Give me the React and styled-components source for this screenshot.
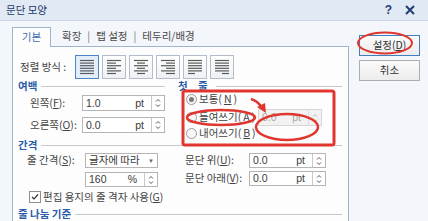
import React from 'react';
import styled, { createGlobalStyle } from 'styled-components';

const GlobalStyle = createGlobalStyle`
  html, body {
    margin: 0;
    padding: 0;
    background: #f3f6fa;
  }
  body {
    font-family: "Noto Sans CJK KR", "Noto Sans", sans-serif;
    font-size: 10.5px;
  }
`;

const Window = styled.div`
  position: relative;
  width: 428px;
  height: 221px;
  overflow: hidden;
  background: #f3f6fa;
  color: #444;
  display: flex;
  flex-direction: column;
  font-family: "Noto Sans CJK KR", "Noto Sans", sans-serif;
  font-size: 10.5px;
  line-height: 1;
`;

const TitleBar = styled.div`
  height: 20px;
  flex: none;
  display: flex;
  align-items: center;
  padding: 0 8px 0 6px;
  background: #e1e9f4;
  border-bottom: 1px solid #cbd7e6;
  color: #1d3a66;
`;

const Title = styled.span`
  flex: 1;
`;

const TitleButton = styled.span`
  width: 21px;
  display: flex;
  justify-content: center;
  color: #1d3f73;
  font-weight: bold;
  font-size: 12px;
  font-family: "Liberation Sans", sans-serif;
`;

const Body = styled.div`
  flex: 1;
  display: flex;
  padding: 5px 0 0 12px;
  gap: 10px;
  min-height: 0;
`;

const TabArea = styled.div`
  width: 337px;
  display: flex;
  flex-direction: column;
`;

const TabStrip = styled.div`
  height: 20px;
  display: flex;
  align-items: flex-end;
`;

const ActiveTab = styled.div`
  width: 37px;
  height: 19px;
  display: flex;
  align-items: center;
  justify-content: center;
  background: #fdfdfd;
  border: 1px solid #9fb3cd;
  border-bottom: none;
  margin-bottom: -1px;
  position: relative;
  z-index: 1;
  color: #3c6bb3;
`;

const OtherTabs = styled.div`
  display: flex;
  align-items: center;
  gap: 6px;
  height: 19px;
  padding-left: 11px;
  color: #4a4a4a;
`;

const Sep = styled.span`
  color: #777;
`;

const Panel = styled.div`
  flex: 1;
  background: #fdfdfd;
  border: 1px solid #9fb3cd;
  border-bottom: none;
  padding: 8px 6px 0 5px;
  display: flex;
  flex-direction: column;
`;

const AlignRow = styled.div`
  height: 24px;
  display: flex;
  align-items: center;
  padding-left: 2px;
`;

const AlignLabel = styled.span`
  width: 55px;
`;

const AlignButtons = styled.div`
  display: flex;
  gap: 3px;
`;

const AlignButton = styled.div`
  width: 22px;
  height: 22px;
  border: 1px solid ${p => (p.$active ? '#4d86c4' : '#b3bdc9')};
  background: ${p => (p.$active ? '#e4eefa' : 'linear-gradient(#ffffff, #eef1f4)')};
  display: flex;
  align-items: center;
  justify-content: center;
`;

const TopGroups = styled.div`
  display: grid;
  grid-template-columns: 147px 1fr;
  column-gap: 13px;
  margin-top: 1px;
`;

const Group = styled.div`
  display: flex;
  flex-direction: column;
  margin-top: ${p => p.$mt || 0}px;
`;

const GroupHeader = styled.div`
  height: 12px;
  display: flex;
  align-items: center;
  gap: 4px;
  color: #2a5bab;
  font-weight: bold;
  letter-spacing: ${p => (p.$spaced ? '4px' : '0')};

  &::after {
    content: '';
    flex: 1;
    height: 1px;
    background: #c9c9c9;
  }
`;

const FieldRow = styled.div`
  display: flex;
  align-items: center;
  height: ${p => p.$h || 16}px;
  margin-top: ${p => p.$mt || 0}px;
  padding-left: ${p => p.$indent || 0}px;
`;

const Label = styled.span`
  width: ${p => p.$w}px;
  flex: none;
  white-space: nowrap;
`;

const U = styled.span`
  text-decoration: underline;
`;

const InputBox = styled.div`
  width: ${p => p.$w}px;
  height: ${p => p.$h || 16}px;
  box-sizing: border-box;
  display: flex;
  align-items: center;
  border: 1px solid ${p => (p.$disabled ? '#d6d6d6' : '#b5b5b5')};
  background: ${p => (p.$disabled ? '#f2f2f2' : '#ffffff')};
  color: ${p => (p.$disabled ? '#a8a8a8' : '#3a3a3a')};
  font-family: "Liberation Sans", "Noto Sans CJK KR", sans-serif;
`;

const InputValue = styled.span`
  flex: 1;
  padding-left: 3px;
  font-family: ${p => (p.$kr ? '"Noto Sans CJK KR", sans-serif' : 'inherit')};
`;

const InputUnit = styled.span`
  padding-right: 7px;
`;

const Spinner = styled.div`
  width: 12px;
  align-self: stretch;
  border-left: 1px solid ${p => (p.$disabled ? '#dcdcdc' : '#c8c8c8')};
  display: flex;
  flex-direction: column;
  align-items: center;
  justify-content: center;
`;

const DropArrow = styled.span`
  width: 12px;
  display: flex;
  justify-content: center;
  font-size: 6px;
  color: #666;
`;

const RadioRow = styled.div`
  display: flex;
  align-items: center;
  height: ${p => p.$h}px;
  margin-top: ${p => p.$mt || 0}px;
  padding-left: 8px;
`;

const RadioLabel = styled.label`
  display: flex;
  align-items: center;
  gap: 2px;
  width: ${p => (p.$w ? `${p.$w}px` : 'auto')};
`;

const RadioCircle = styled.span`
  width: 9px;
  height: 9px;
  border-radius: 50%;
  border: 1px solid #9a9a9a;
  background: #f7f7f7;
  display: flex;
  align-items: center;
  justify-content: center;

  &::after {
    content: '';
    width: 5px;
    height: 5px;
    border-radius: 50%;
    background: ${p => (p.$checked ? '#7a7a7a' : 'transparent')};
  }
`;

const SpacingGrid = styled.div`
  display: grid;
  grid-template-columns: 160px 1fr;
`;

const CheckBox = styled.span`
  width: 10px;
  height: 10px;
  border: 1px solid #8f8f8f;
  background: #fff;
  display: flex;
  align-items: center;
  justify-content: center;
  margin-right: 2px;
`;

const Buttons = styled.div`
  display: flex;
  flex-direction: column;
  gap: 4px;
  padding-top: 9px;
`;

const Button = styled.div`
  width: 61px;
  height: 21px;
  box-sizing: border-box;
  display: flex;
  align-items: center;
  justify-content: center;
  border: 1px solid ${p => (p.$primary ? '#3f7fbf' : '#adadad')};
  background: linear-gradient(#fbfbfb, #ececec);
  color: #333;
`;

const Overlay = styled.svg`
  position: absolute;
  left: 0;
  top: 0;
  pointer-events: none;
`;

const alignIcons = [
  [[5, 19], [5, 19], [5, 19], [5, 19], [5, 19], [5, 19]],
  [[5, 19], [5, 14], [5, 19], [5, 14], [5, 19], [5, 14]],
  [[5, 19], [8, 16], [5, 19], [8, 16], [5, 19], [8, 16]],
  [[5, 19], [10, 19], [5, 19], [10, 19], [5, 19], [10, 19]],
  [[5, 19], [5, 19], [5, 19], [5, 19], [5, 19], [5, 12]],
  [[5, 19], [5, 19], [5, 19], [5, 19], [5, 19], [12, 19]],
];

function AlignIcon({ lines }) {
  return (
    <svg width="22" height="22" viewBox="1 1 22 22">
      {lines.map(([a, b], i) => (
        <line key={i} x1={a} x2={b} y1={5.5 + i * 2.6} y2={5.5 + i * 2.6} stroke="#5a5a5a" strokeWidth="1.2" />
      ))}
    </svg>
  );
}

function SpinArrows({ disabled }) {
  const c = disabled ? '#bdbdbd' : '#555';
  return (
    <svg width="6" height="10" viewBox="0 0 6 10">
      <path d="M1 3.5 L3 1.5 L5 3.5" fill="none" stroke={c} strokeWidth="1" />
      <path d="M1 6.5 L3 8.5 L5 6.5" fill="none" stroke={c} strokeWidth="1" />
    </svg>
  );
}

function NumberInput({ value, unit, w, disabled, h }) {
  return (
    <InputBox $w={w} $h={h} $disabled={disabled}>
      <InputValue>{value}</InputValue>
      <InputUnit>{unit}</InputUnit>
      <Spinner $disabled={disabled}>
        <SpinArrows disabled={disabled} />
      </Spinner>
    </InputBox>
  );
}

export default function App() {
  return (
    <>
      <GlobalStyle />
      <Window>
        <TitleBar>
          <Title>문단 모양</Title>
          <TitleButton>?</TitleButton>
          <TitleButton>
            <svg width="10" height="10" viewBox="0 0 10 10">
              <path d="M1 1 L9 9 M9 1 L1 9" stroke="#1d3f73" strokeWidth="2" />
            </svg>
          </TitleButton>
        </TitleBar>
        <Body>
          <TabArea>
            <TabStrip>
              <ActiveTab>기본</ActiveTab>
              <OtherTabs>
                <span>확장</span>
                <Sep>|</Sep>
                <span>탭 설정</span>
                <Sep>|</Sep>
                <span>테두리/배경</span>
              </OtherTabs>
            </TabStrip>
            <Panel>
              <AlignRow>
                <AlignLabel>정렬 방식 :</AlignLabel>
                <AlignButtons>
                  {alignIcons.map((lines, i) => (
                    <AlignButton key={i} $active={i === 0}>
                      <AlignIcon lines={lines} />
                    </AlignButton>
                  ))}
                </AlignButtons>
              </AlignRow>

              <TopGroups>
                <Group>
                  <GroupHeader>여백</GroupHeader>
                  <FieldRow $mt={3} $indent={12}>
                    <Label $w={52}>왼쪽(<U>F</U>):</Label>
                    <NumberInput value="1.0" unit="pt" w={84} />
                  </FieldRow>
                  <FieldRow $mt={6} $indent={12}>
                    <Label $w={52}>오른쪽(<U>O</U>):</Label>
                    <NumberInput value="0.0" unit="pt" w={84} />
                  </FieldRow>
                </Group>
                <Group>
                  <GroupHeader $spaced>첫 줄</GroupHeader>
                  <RadioRow $h={13} $mt={1}>
                    <RadioLabel>
                      <RadioCircle $checked />
                      보통(<U>N</U>)
                    </RadioLabel>
                  </RadioRow>
                  <RadioRow $h={17} $mt={3}>
                    <RadioLabel $w={72}>
                      <RadioCircle />
                      들여쓰기(<U>A</U>)
                    </RadioLabel>
                    <NumberInput value="0.0" unit="pt" w={64} h={17} disabled />
                  </RadioRow>
                  <RadioRow $h={12} $mt={1}>
                    <RadioLabel>
                      <RadioCircle />
                      내어쓰기(<U>B</U>)
                    </RadioLabel>
                  </RadioRow>
                </Group>
              </TopGroups>

              <Group>
                <GroupHeader>간격</GroupHeader>
                <SpacingGrid>
                  <Group>
                    <FieldRow $mt={2} $h={15} $indent={9}>
                      <Label $w={58}>줄 간격(<U>S</U>):</Label>
                      <InputBox $w={73} $h={15}>
                        <InputValue $kr>글자에 따라</InputValue>
                        <DropArrow>▼</DropArrow>
                      </InputBox>
                    </FieldRow>
                    <FieldRow $mt={4} $h={15} $indent={67}>
                      <NumberInput value="160" unit="%" w={73} h={15} />
                    </FieldRow>
                    <FieldRow $mt={3} $h={14} $indent={11}>
                      <CheckBox>
                        <svg width="8" height="8" viewBox="0 0 8 8">
                          <path d="M1 4 L3 6 L7 1.5" fill="none" stroke="#333" strokeWidth="1.2" />
                        </svg>
                      </CheckBox>
                      편집 용지의 줄 격자 사용(<U>G</U>)
                    </FieldRow>
                  </Group>
                  <Group>
                    <FieldRow $mt={2} $h={15} $indent={7}>
                      <Label $w={64}>문단 위(<U>U</U>):</Label>
                      <NumberInput value="0.0" unit="pt" w={77} h={15} />
                    </FieldRow>
                    <FieldRow $mt={3} $h={15} $indent={7}>
                      <Label $w={64}>문단 아래(<U>V</U>):</Label>
                      <NumberInput value="0.0" unit="pt" w={77} h={15} />
                    </FieldRow>
                  </Group>
                </SpacingGrid>
              </Group>

              <Group $mt={4}>
                <GroupHeader>줄 나눔 기준</GroupHeader>
              </Group>
            </Panel>
          </TabArea>
          <Buttons>
            <Button $primary>설정(<U>D</U>)</Button>
            <Button>취소</Button>
          </Buttons>
        </Body>

        <Overlay width="428" height="221" viewBox="0 0 428 221">
          <g fill="none" stroke="#e0362f">
            <ellipse cx="385" cy="43" rx="27" ry="10.5" strokeWidth="2" />
            <rect x="183" y="91" width="151" height="54" rx="2" strokeWidth="3" />
            <ellipse cx="221" cy="117.5" rx="34" ry="7.5" strokeWidth="2.5" />
            <ellipse cx="287" cy="127" rx="31" ry="13" strokeWidth="2.5" />
            <path d="M251 99 Q258 101 262 108" strokeWidth="2.5" />
          </g>
          <path d="M257 107 L266 113 L265 103 Z" fill="#e0362f" />
        </Overlay>
      </Window>
    </>
  );
}
